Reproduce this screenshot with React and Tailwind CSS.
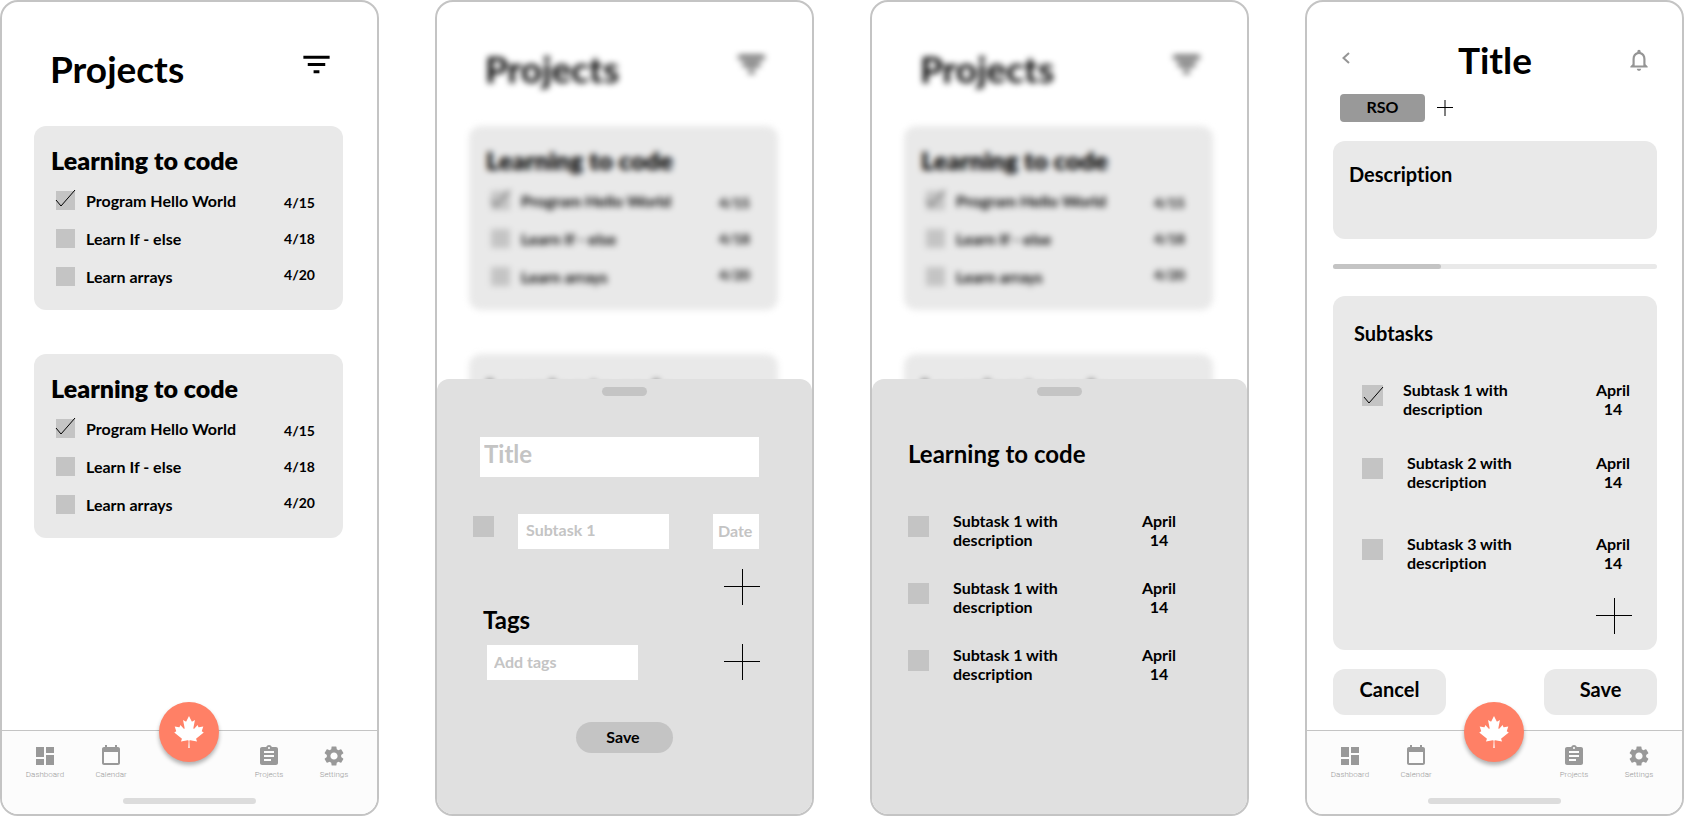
import { MdAssignment, MdDashboard, MdFilterList, MdNotificationsNone, MdSettings } from 'react-icons/md';

const PROJECTS = [
  {
    id: 'a',
    name: 'Learning to code',
    tasks: [
      { label: 'Program Hello World', date: '4/15', done: true },
      { label: 'Learn If - else', date: '4/18' },
      { label: 'Learn arrays', date: '4/20' },
    ],
  },
  {
    id: 'b',
    name: 'Learning to code',
    tasks: [
      { label: 'Program Hello World', date: '4/15', done: true },
      { label: 'Learn If - else', date: '4/18' },
      { label: 'Learn arrays', date: '4/20' },
    ],
  },
];

function Phone({ children, label }) {
  return (
    <section
      aria-label={label}
      className="relative flex min-h-screen min-w-0 flex-col overflow-hidden rounded-[18px] border-2 border-[#c4c4c4] bg-white"
    >
      {children}
    </section>
  );
}

function Checkbox({ size = 'size-[21px]', tick = 'M2 12l5 6L21 2', ...props }) {
  return (
    <span className={`grid shrink-0 ${size}`}>
      <input
        type="checkbox"
        className={`peer col-start-1 row-start-1 appearance-none bg-[#c4c4c4] ${size}`}
        {...props}
      />
      <svg
        aria-hidden="true"
        className={`pointer-events-none col-start-1 row-start-1 hidden overflow-visible peer-checked:block ${size}`}
        fill="none"
        stroke="black"
      >
        <path d={tick} />
      </svg>
    </span>
  );
}

function PlusButton({ label, small }) {
  return (
    <button type="button" aria-label={label} className={small ? 'size-4' : 'size-9'}>
      {small ? (
        <svg viewBox="0 0 16 16" className="size-4" stroke="black" aria-hidden="true">
          <path d="M0 7.5h16M8 0v16" />
        </svg>
      ) : (
        <svg viewBox="0 0 36 36" className="size-9" stroke="black" aria-hidden="true">
          <path d="M0 17.5h36M18.5 0v36" />
        </svg>
      )}
    </button>
  );
}

function ProjectCard({ project }) {
  return (
    <article className="rounded-xl bg-[#e9e9e9] pt-5 pr-7 pb-6 pl-[17px]">
      <h2 className="text-[25px] leading-[29px] font-extrabold">{project.name}</h2>
      <div className="mt-4 flex justify-between pl-[5px]">
        <ul className="flex flex-col gap-[19px]">
          {project.tasks.map((task) => (
            <li key={task.label}>
              <label className="flex items-center gap-[11px] leading-[19px]">
                <Checkbox size="size-[19px]" tick="M0 9l5 6L19 -1" defaultChecked={task.done} />
                {task.label}
              </label>
            </li>
          ))}
        </ul>
        <ul className="flex flex-col gap-[17px] pt-[2px] text-sm leading-[19px]">
          {project.tasks.map((task) => (
            <li key={task.label}>{task.date}</li>
          ))}
        </ul>
      </div>
    </article>
  );
}

function ProjectList() {
  return (
    <div className="flex flex-1 flex-col pt-[45px] pr-[34px] pl-8">
      <header className="flex justify-between pr-[9px] pl-4">
        <h1 className="text-[37px] leading-[43px]">Projects</h1>
        <button type="button" aria-label="Filter" className="size-[35px]">
          <MdFilterList className="size-[35px]" />
        </button>
      </header>
      <div className="mt-9 flex flex-col gap-11">
        {PROJECTS.map((project) => (
          <ProjectCard key={project.id} project={project} />
        ))}
      </div>
    </div>
  );
}

function CalendarIcon({ className }) {
  return (
    <svg viewBox="0 0 24 24" fill="currentColor" className={className} aria-hidden="true">
      <path d="M19 3h-1V1h-2v2H8V1H6v2H5c-1.11 0-1.99.9-1.99 2L3 19c0 1.1.89 2 2 2h14c1.1 0 2-.9 2-2V5c0-1.1-.9-2-2-2zm0 16H5V8h14v11z" />
    </svg>
  );
}

function MapleLeaf({ className }) {
  return (
    <svg viewBox="-2015 -2000 4030 4030" fill="currentColor" className={className} aria-hidden="true">
      <path d="m-90 2030 45-863a95 95 0 0 0-111-98l-859 151 116-320a65 65 0 0 0-20-73l-941-762 212-99a65 65 0 0 0 34-79l-186-572 542 115a65 65 0 0 0 73-38l105-247 423 454a65 65 0 0 0 111-57l-204-1052 327 189a65 65 0 0 0 91-27l332-652 332 652a65 65 0 0 0 91 27l327-189-204 1052a65 65 0 0 0 111 57l423-454 105 247a65 65 0 0 0 73 38l542-115-186 572a65 65 0 0 0 34 79l212 99-941 762a65 65 0 0 0-20 73l116 320-859-151a95 95 0 0 0-111 98l45 863z" />
    </svg>
  );
}

function NavLink({ icon: Icon, children }) {
  return (
    <a href="#" className="flex w-11 flex-col items-center text-[#999]">
      <Icon className="size-6" />
      <span className="mt-[2px] [font-family:Roboto,sans-serif] text-[8px] leading-[10px] font-light">{children}</span>
    </a>
  );
}

function BottomNav() {
  return (
    <nav aria-label="Main" className="relative border-t border-[#c4c4c4] bg-[#fcfcfc] pt-[13px] pb-2.5">
      <div className="flex justify-between px-[21px]">
        <div className="flex gap-[22px]">
          <NavLink icon={MdDashboard}>Dashboard</NavLink>
          <NavLink icon={CalendarIcon}>Calendar</NavLink>
        </div>
        <div className="flex gap-[21px]">
          <NavLink icon={MdAssignment}>Projects</NavLink>
          <NavLink icon={MdSettings}>Settings</NavLink>
        </div>
      </div>
      <div className="mx-auto mt-[18px] h-1.5 w-[133px] rounded-full bg-[#dcdcdc]" />
      <div className="pointer-events-none absolute inset-x-0 -top-[29px] flex justify-center pr-px">
        <button
          type="button"
          aria-label="Home"
          className="pointer-events-auto grid size-[60px] place-items-center rounded-full bg-[#ff8066] shadow-[0_3px_4px_rgba(0,0,0,0.3)]"
        >
          <MapleLeaf className="size-8 text-white" />
        </button>
      </div>
    </nav>
  );
}

function Sheet({ children, label }) {
  return (
    <div
      role="dialog"
      aria-label={label}
      className="absolute inset-x-0 bottom-0 flex h-[435px] flex-col rounded-t-xl bg-[#e0e0e0] pt-2"
    >
      <div className="h-[9px] w-[45px] shrink-0 self-center rounded-full bg-[#c4c4c4]" />
      {children}
    </div>
  );
}

function Backdrop() {
  return (
    <div inert className="blur-[3px]">
      <ProjectList />
    </div>
  );
}

function NewProjectSheet() {
  const field = 'min-w-0 bg-white placeholder:text-[#c4c4c4] placeholder:opacity-100';
  return (
    <Sheet label="New project">
      <form className="mt-[41px] flex flex-col pr-[53px] pl-9">
        <input
          aria-label="Project title"
          placeholder="Title"
          className={`ml-[7px] h-10 px-1 pb-[7px] text-2xl leading-[29px] ${field}`}
        />
        <div className="mt-[37px] flex">
          <div className="pt-[2px]">
            <Checkbox aria-label="Subtask 1 done" />
          </div>
          <input
            aria-label="Subtask 1"
            placeholder="Subtask 1"
            className={`ml-6 h-[35px] w-[151px] px-2 pb-1 ${field}`}
          />
          <input
            aria-label="Date"
            placeholder="Date"
            className={`ml-auto h-[35px] w-[46px] pl-[5px] pb-[2px] ${field}`}
          />
        </div>
        <div className="-mr-px mt-5 flex justify-end">
          <PlusButton label="Add subtask" />
        </div>
        <label htmlFor="tags" className="self-start pl-2.5 text-2xl leading-[29px]">
          Tags
        </label>
        <div className="-mr-px mt-2.5 flex items-end justify-between pl-3.5">
          <input id="tags" placeholder="Add tags" className={`h-[35px] w-[151px] px-[7px] pb-[2px] ${field}`} />
          <PlusButton label="Add tag" />
        </div>
      </form>
      <button
        type="button"
        className="mt-[42px] mr-px h-[31px] w-[97px] self-center rounded-full bg-[#c4c4c4] pr-[2px] pb-[2px] leading-[19px]"
      >
        Save
      </button>
    </Sheet>
  );
}

function ProjectSheet() {
  return (
    <Sheet label="Learning to code">
      <div className="mt-[43px] pr-[70px] pl-9">
        <h2 className="text-2xl leading-[29px]">Learning to code</h2>
        <ul className="mt-[43px] flex flex-col gap-[29px]">
          {['1', '2', '3'].map((id) => (
            <li key={id} className="flex justify-between leading-[19px]">
              <label className="flex gap-6">
                <span className="pt-[5px]">
                  <Checkbox />
                </span>
                <span className="w-[120px]">Subtask 1 with description</span>
              </label>
              <span className="w-9 text-center">April 14</span>
            </li>
          ))}
        </ul>
      </div>
    </Sheet>
  );
}

const SUBTASKS = [
  { label: 'Subtask 1 with description', done: true, row: 'gap-5', space: '' },
  { label: 'Subtask 2 with description', row: 'gap-6', space: 'mt-[35px]' },
  { label: 'Subtask 3 with description', row: 'gap-6', space: 'mt-[43px]' },
];

function ProjectDetail() {
  return (
    <div className="flex flex-1 flex-col pt-9 pr-[25px] pl-[26px]">
      <header className="grid grid-cols-[1fr_auto_1fr] items-center">
        <button type="button" aria-label="Back" className="mb-1 ml-2 size-3 text-[#959595]">
          <svg viewBox="0 0 12 12" className="size-3" fill="none" stroke="currentColor" strokeWidth="2" aria-hidden="true">
            <path d="M8 1L2.5 6L8 11" />
          </svg>
        </button>
        <h1 className="text-[37px] leading-[43px]">Title</h1>
        <button type="button" aria-label="Notifications" className="mr-[5px] size-[26px] justify-self-end text-[#959595]">
          <MdNotificationsNone className="size-[26px]" />
        </button>
      </header>
      <div className="mt-[13px] flex items-center gap-3 pl-[7px]">
        <span className="h-7 w-[85px] rounded bg-[#999] pt-[3px] text-center leading-[19px]">RSO</span>
        <PlusButton label="Add tag" small />
      </div>
      <section className="mt-[19px] h-[98px] rounded-xl bg-[#e9e9e9] px-4 pt-[21px]">
        <h2 className="text-xl leading-6">Description</h2>
      </section>
      <div
        role="progressbar"
        aria-label="Progress"
        aria-valuenow={33}
        aria-valuemin={0}
        aria-valuemax={100}
        className="mt-[25px] h-[5px] rounded-full bg-[#e9e9e9]"
      >
        <div className="h-full w-1/3 rounded-full bg-[#c4c4c4]" />
      </div>
      <section className="mt-[27px] flex flex-col rounded-xl bg-[#e9e9e9] px-[25px] pt-[25px] pb-4">
        <h2 className="-ml-1 text-xl leading-6">Subtasks</h2>
        <ul className="mt-[35px] pl-1">
          {SUBTASKS.map((task) => (
            <li key={task.label} className={`flex justify-between leading-[19px] ${task.space}`}>
              <label className={`flex ${task.row}`}>
                <span className="pt-[5px]">
                  <Checkbox defaultChecked={task.done} />
                </span>
                <span className="w-[120px]">{task.label}</span>
              </label>
              <span className="w-[38px] text-center">April 14</span>
            </li>
          ))}
        </ul>
        <div className="mt-[26px] flex justify-end">
          <PlusButton label="Add subtask" />
        </div>
      </section>
      <div className="mt-[19px] mb-[15px] flex justify-between text-xl leading-6">
        <button type="button" className="h-[46px] w-[113px] rounded-xl bg-[#e9e9e9] pb-1.5">
          Cancel
        </button>
        <button type="button" className="h-[46px] w-[113px] rounded-xl bg-[#e9e9e9] pb-1.5">
          Save
        </button>
      </div>
    </div>
  );
}

export default function App() {
  return (
    <main className="grid grid-cols-4 gap-14 bg-white font-['Lato',sans-serif] text-base font-bold text-black [font-variant-ligatures:none]">
      <Phone label="Projects">
        <ProjectList />
        <BottomNav />
      </Phone>
      <Phone label="Create a project">
        <Backdrop />
        <NewProjectSheet />
      </Phone>
      <Phone label="Project preview">
        <Backdrop />
        <ProjectSheet />
      </Phone>
      <Phone label="Project details">
        <ProjectDetail />
        <BottomNav />
      </Phone>
    </main>
  );
}
